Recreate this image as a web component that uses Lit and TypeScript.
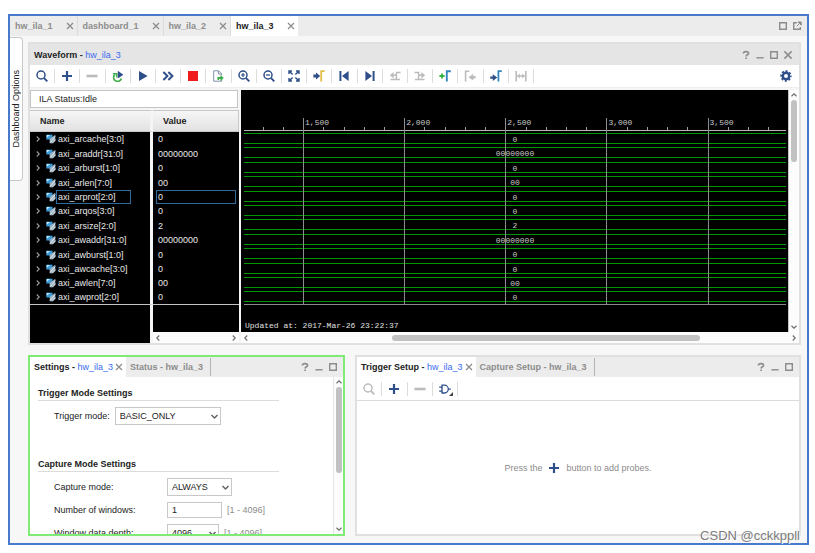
import { LitElement, html, css, svg, nothing } from "lit";
import { customElement } from "lit/decorators.js";
import { classMap } from "lit/directives/class-map.js";

interface Signal {
  name: string;
  value: string;
}

const SIGNALS: Signal[] = [
  { name: "axi_arcache[3:0]", value: "0" },
  { name: "axi_araddr[31:0]", value: "00000000" },
  { name: "axi_arburst[1:0]", value: "0" },
  { name: "axi_arlen[7:0]", value: "00" },
  { name: "axi_arprot[2:0]", value: "0" },
  { name: "axi_arqos[3:0]", value: "0" },
  { name: "axi_arsize[2:0]", value: "2" },
  { name: "axi_awaddr[31:0]", value: "00000000" },
  { name: "axi_awburst[1:0]", value: "0" },
  { name: "axi_awcache[3:0]", value: "0" },
  { name: "axi_awlen[7:0]", value: "00" },
  { name: "axi_awprot[2:0]", value: "0" },
];
const SELECTED = 4;

const RANGE_START = 1208;
const RANGE_SPAN = 2680;
const toPercent = (t: number) => ((t - RANGE_START) / RANGE_SPAN) * 100;
const MAJOR = [1500, 2000, 2500, 3000, 3500];
const MINOR = Array.from({ length: 26 }, (_, i) => 1300 + i * 100).filter(
  (t) => t % 500 !== 0
);

const NAVY = "#2f4f8a";

/* Every glyph is drawn on a 12 x 12 grid. */
const GLYPHS = {
  search: svg`<circle cx="5" cy="5" r="4" fill="none" stroke="currentColor" stroke-width="1.5"/><path d="M8 8l3.3 3.3" stroke="currentColor" stroke-width="1.8"/>`,
  plus: svg`<path d="M6 1v10M1 6h10" stroke="currentColor" stroke-width="2.2"/>`,
  minus: svg`<path d="M0.5 6h11" stroke="currentColor" stroke-width="2.6"/>`,
  rerun: svg`<path d="M3.2 4.2A4 4 0 1 0 9.4 8.6" fill="none" stroke="#3fae49" stroke-width="1.7"/><path d="M.8 3.6h4v3.8" fill="none" stroke="#3fae49" stroke-width="1.4"/><path d="M5.8 .8l5.6 3.9-5.6 3.9z" fill="${NAVY}"/>`,
  play: svg`<path d="M2 1l8.6 5L2 11z" fill="currentColor"/>`,
  forward: svg`<path d="M1.4 2l4 4-4 4M6.4 2l4 4-4 4" fill="none" stroke="currentColor" stroke-width="2"/>`,
  stop: svg`<path d="M1 1h10v10H1z" fill="#ee1c1c"/>`,
  exportFile: svg`<path d="M6.6 .8H1.7v10.4h8V9.4M6.6 .8l3 3v1.6M6.4 .8v3.2h3.2" fill="none" stroke="#8290a8" stroke-width="1"/><path d="M5.4 10V7h3V5l3.4 3-3.4 3V9H7v1z" fill="#3fae49"/>`,
  zoomIn: svg`<circle cx="5" cy="5" r="4" fill="none" stroke="currentColor" stroke-width="1.5"/><path d="M8 8l3.3 3.3" stroke="currentColor" stroke-width="1.8"/><path d="M5 3v4M3 5h4" stroke="currentColor" stroke-width="1.2"/>`,
  zoomOut: svg`<circle cx="5" cy="5" r="4" fill="none" stroke="currentColor" stroke-width="1.5"/><path d="M8 8l3.3 3.3" stroke="currentColor" stroke-width="1.8"/><path d="M3 5h4" stroke="currentColor" stroke-width="1.3"/>`,
  fit: svg`<path d="M1 4V1h3M8 1h3v3M11 8v3H8M4 11H1V8M1 1l3.6 3.6M11 1L7.4 4.6M11 11L7.4 7.4M1 11l3.6-3.6" fill="none" stroke="currentColor" stroke-width="1.4"/>`,
  toCursor: svg`<path d="M.4 4.6h2.6V2.6L7.2 6 3 9.4v-2H.4z" fill="${NAVY}"/><path d="M8.2 11.5V1.2h3.4" fill="none" stroke="#e3bd4a" stroke-width="1.8"/>`,
  first: svg`<path d="M2.4 1v10" stroke="currentColor" stroke-width="2"/><path d="M10.6 1v10L4 6z" fill="currentColor"/>`,
  last: svg`<path d="M9.6 1v10" stroke="currentColor" stroke-width="2"/><path d="M1.4 1v10L8 6z" fill="currentColor"/>`,
  prevEdge: svg`<path d="M11.5 2.6H7.4v7M11 9.6H1.5" fill="none" stroke="currentColor" stroke-width="1.5"/><path d="M4.6 2v6.4L.8 5.2z" fill="currentColor"/><path d="M4 5.2h3" stroke="currentColor" stroke-width="1.6"/>`,
  nextEdge: svg`<path d="M.5 2.6h4.1v7M1 9.6h9.5" fill="none" stroke="currentColor" stroke-width="1.5"/><path d="M7.4 2v6.4l3.8-3.2z" fill="currentColor"/><path d="M5 5.2h3" stroke="currentColor" stroke-width="1.6"/>`,
  addMarker: svg`<path d="M3 3.4v5.2M.4 6h5.2" stroke="#35b23f" stroke-width="1.8"/><path d="M7.8 11.5V1.2h4" fill="none" stroke="#3585bd" stroke-width="1.9"/>`,
  prevMarker: svg`<path d="M1.6 11.5V1.2h3.6" fill="none" stroke="currentColor" stroke-width="1.6"/><path d="M11.6 6H9.2V3.8L4.4 7.2l4.8 3.4V8.4h2.4z" fill="currentColor"/>`,
  nextMarker: svg`<path d="M.2 6.4h2.6V4.2L7.2 7.6 2.8 11V8.8H.2z" fill="${NAVY}"/><path d="M8.4 11.5V1.2h3.4" fill="none" stroke="#3585bd" stroke-width="1.8"/>`,
  span: svg`<path d="M1.2 1v10.4M10.8 1v10.4M2.5 6h7" stroke="currentColor" stroke-width="1.6"/><path d="M4.8 3.6v4.8L2 6zM7.2 3.6v4.8L10 6z" fill="currentColor"/>`,
  gear: svg`<circle cx="6" cy="6" r="3.2" fill="none" stroke="currentColor" stroke-width="2.4"/><circle cx="6" cy="6" r="4.8" fill="none" stroke="currentColor" stroke-width="1.8" stroke-dasharray="2.1 1.67" stroke-dashoffset="1.05"/>`,
  gate: svg`<path d="M3 2.2h2.4a3.9 3.9 0 0 1 0 7.8H3z" fill="none" stroke="currentColor" stroke-width="1.3"/><path d="M.2 4.1h3M.2 8.1h3M9.2 6.1h2.6" stroke="currentColor" stroke-width="1.3"/>`,
  close: svg`<path d="M2.4 2.4l7.2 7.2M9.6 2.4l-7.2 7.2" stroke="currentColor" stroke-width="1.5"/>`,
  minimize: svg`<path d="M2.4 8.8h7.2" stroke="currentColor" stroke-width="1.4"/>`,
  maximize: svg`<path d="M2.7 2.7h6.6v6.6H2.7z" fill="none" stroke="currentColor" stroke-width="1.4"/>`,
  popout: svg`<path d="M6 2.7H2.7v6.6h6.6V7" fill="none" stroke="currentColor" stroke-width="1.4"/><path d="M7 2h3.2v3.2zM5.8 6.2l3-3" fill="currentColor" stroke="currentColor" stroke-width="1"/>`,
  help: svg`<path d="M3.4 4.4c0-2.4 5.2-2.4 5.2 0 0 1.4-2.5 1.3-2.5 3M6.1 8.5V10" fill="none" stroke="currentColor" stroke-width="1.6"/>`,
  up: svg`<path d="M3 7.5l3-3 3 3" fill="none" stroke="currentColor" stroke-width="1.3"/>`,
  down: svg`<path d="M3 4.5l3 3 3-3" fill="none" stroke="currentColor" stroke-width="1.3"/>`,
  left: svg`<path d="M7.5 3l-3 3 3 3" fill="none" stroke="currentColor" stroke-width="1.3"/>`,
  right: svg`<path d="M4.5 3l3 3-3 3" fill="none" stroke="currentColor" stroke-width="1.3"/>`,
  drop: svg`<path d="M2 4l4 4 4-4" fill="none" stroke="currentColor" stroke-width="2"/>`,
  bus: svg`<path d="M.4 .8h7.4v5.8H.4z" fill="#3c9ad6"/><path d="M.8 1.2h4L.8 4.6z" fill="#c8ecff"/><path d="M4.4 6L11.2 1v7.4L7.4 11.2H4.4z" fill="#9fb4c2"/><path d="M5 10.2L11 3.2M7.6 11.2l4-4.6" stroke="#eef3f6" stroke-width="1"/>`,
};
type GlyphName = keyof typeof GLYPHS;

const glyph = (name: GlyphName, extra = "") =>
  html`<svg class="glyph ${extra}" viewBox="0 0 12 12" aria-hidden="true">${GLYPHS[name]}</svg>`;

const shared = css`
  * {
    box-sizing: border-box;
  }
  button {
    margin: 0;
    padding: 0;
    border: 0;
    background: none;
    font: inherit;
    color: inherit;
    display: flex;
    align-items: center;
    justify-content: center;
  }
  .glyph {
    display: block;
    flex: none;
    width: 12px;
    height: 12px;
  }
  .small {
    width: 10px;
    height: 10px;
  }
  .subject {
    color: #3a6cf0;
    font-weight: 400;
  }
  .controls {
    display: flex;
    gap: 2px;
    margin-left: auto;
    color: #8c8c8c;
  }
  .tools {
    display: grid;
    grid-auto-flow: column;
    grid-auto-columns: 1fr;
    align-items: center;
    color: #2f4f8a;
  }
  .tool {
    position: relative;
    height: 14px;
    border-right: 1px solid #dcdcdc;
  }
  .off {
    color: #bcbcbc;
  }
  .bar {
    display: flex;
    align-items: center;
    justify-content: space-between;
    background: #fcfcfc;
    color: #6a6a6a;
  }
  .vertical {
    flex-direction: column;
    width: 10px;
    flex: none;
  }
  .horizontal {
    height: 11px;
  }
  .track {
    flex: 1;
    align-self: stretch;
    display: flex;
  }
  .vertical .track {
    flex-direction: column;
    align-items: center;
  }
  .horizontal .track {
    align-items: center;
  }
  .thumb {
    border-radius: 3px;
    background: #c1c1c1;
  }
  .vertical .thumb {
    width: 6px;
  }
  .horizontal .thumb {
    height: 6px;
  }
`;

const toolButton = (name: GlyphName, label: string, off = false) => html`<button
  class=${classMap({ tool: true, off })}
  aria-label=${label}
>
  ${glyph(name)}
</button>`;

@customElement("wave-panel")
class WavePanel extends LitElement {
  static styles = [
    shared,
    css`
      :host {
        display: block;
        border: 2px solid #e0e0e0;
        background: #f5f5f5;
      }
      .title {
        display: flex;
        align-items: center;
        height: 21px;
        padding: 0 5px 0 4px;
        background: #e5e5e5;
      }
      .name {
        margin: 0;
        font-size: 9px;
      }
      .toolbar {
        display: flex;
        align-items: center;
        height: 23px;
        padding-right: 7px;
        background: #fff;
        border-bottom: 1px solid #eee;
      }
      .tools {
        width: 504px;
      }
      .settings {
        margin-left: auto;
        color: #2f4f8a;
      }
      .body {
        display: flex;
        padding-top: 2px;
      }
      .left {
        flex: none;
        width: 209px;
        margin-right: 2px;
      }
      .status {
        height: 18px;
        margin-right: 1px;
        padding: 0 8px;
        border: 1px solid #c4c4c4;
        background: #fff;
        line-height: 17px;
      }
      .signals {
        width: 100%;
        margin-top: 2px;
        border-collapse: separate;
        border-spacing: 0;
        table-layout: fixed;
        color: #e8e8e8;
      }
      .names {
        width: 123px;
      }
      .signals th {
        height: 22px;
        padding: 0 10px;
        border: 1px solid #c8c8c8;
        border-width: 1px 1px 1px 0;
        background: linear-gradient(#f6f6f6, #e2e2e2);
        color: #222;
        text-align: left;
      }
      .signals td {
        height: 14px;
        padding: 0;
        background: #000;
        line-height: 12px;
      }
      .signals .tall td {
        height: 15px;
      }
      .signals .first {
        border-right: 3px solid #f5f5f5;
      }
      .signals tr:last-child .cell-line {
        border-bottom: 1px solid #c4c4c4;
      }
      .signal {
        display: flex;
        align-items: center;
        gap: 3px;
        padding-left: 3px;
      }
      .chevron {
        color: #9c9c9c;
      }
      .item {
        display: flex;
        align-items: center;
      }
      .label {
        height: 14px;
        padding: 0 1px;
        border: 1px solid transparent;
      }
      .value {
        height: 14px;
        margin: 0 3px;
        padding: 0 1px;
        border: 1px solid transparent;
      }
      .label.picked {
        width: 75px;
        border-color: #2d6c9c;
      }
      .value.picked {
        border-color: #2d6c9c;
      }
      .signals .filler {
        height: 38px;
        vertical-align: bottom;
      }
      .right {
        flex: 1;
        min-width: 0;
      }
      .view {
        display: flex;
      }
      .plot {
        flex: 1;
        min-width: 0;
        padding: 0 2px 0 3px;
        background: #000;
        border-right: 1px solid #c4c4c4;
        color: #c8c8c8;
        font: 8px "Liberation Mono", monospace;
      }
      .chart {
        position: relative;
        border-bottom: 1px solid #8c8c8c;
      }
      .ruler {
        height: 41px;
        border-bottom: 1px solid #b4b4b4;
        margin-bottom: 1px;
      }
      .major {
        position: absolute;
        top: 28px;
        bottom: 0;
        padding-left: 1px;
        border-left: 1px solid #8c8c8c;
        line-height: 9px;
      }
      .minor {
        position: absolute;
        top: 37px;
        height: 3px;
        border-left: 1px solid #9c9c9c;
      }
      .lane {
        display: flow-root;
        height: 14px;
      }
      .lane.tall {
        height: 15px;
      }
      .lane:last-child {
        height: 14px;
      }
      .trace {
        height: 11px;
        margin-top: 1px;
        border: 1px solid #009600;
        border-width: 1px 0;
        line-height: 11px;
        text-align: center;
      }
      .stamp {
        height: 27px;
        padding: 16px 0 0 1px;
        line-height: 9px;
        color: #e0e0e0;
      }
      .push {
        flex: 144;
      }
      .fill {
        flex: 313;
      }
      .rest {
        flex: 91;
      }
      .page {
        flex: 62;
      }
      .below {
        flex: 161;
      }
    `,
  ];

  private isTall(i: number) {
    return i % 5 === 1 || i % 5 === 3;
  }

  render() {
    return html`
      <header class="title">
        <h2 class="name">Waveform - <span class="subject">hw_ila_3</span></h2>
        <div class="controls">
          <button aria-label="Help">${glyph("help")}</button>
          <button aria-label="Minimize">${glyph("minimize")}</button>
          <button aria-label="Maximize">${glyph("maximize")}</button>
          <button aria-label="Close">${glyph("close")}</button>
        </div>
      </header>
      <div class="toolbar">
        <div class="tools">
          ${toolButton("search", "Find")} ${toolButton("plus", "Add")}
          ${toolButton("minus", "Remove", true)} ${toolButton("rerun", "Run trigger repeatedly")}
          ${toolButton("play", "Run trigger")} ${toolButton("forward", "Run immediate")}
          ${toolButton("stop", "Stop")} ${toolButton("exportFile", "Export data")}
          ${toolButton("zoomIn", "Zoom in")} ${toolButton("zoomOut", "Zoom out")}
          ${toolButton("fit", "Zoom fit")} ${toolButton("toCursor", "Go to cursor")}
          ${toolButton("first", "Go to start")} ${toolButton("last", "Go to end")}
          ${toolButton("prevEdge", "Previous transition", true)}
          ${toolButton("nextEdge", "Next transition", true)}
          ${toolButton("addMarker", "Add marker")}
          ${toolButton("prevMarker", "Previous marker", true)}
          ${toolButton("nextMarker", "Next marker")} ${toolButton("span", "Swap cursors", true)}
        </div>
        <button class="settings" aria-label="Settings">${glyph("gear")}</button>
      </div>
      <div class="body">
        <div class="left">
          <div class="status">ILA Status:Idle</div>
          <table class="signals">
            <colgroup>
              <col class="names" />
              <col />
            </colgroup>
            <thead>
              <tr>
                <th class="first">Name</th>
                <th>Value</th>
              </tr>
            </thead>
            <tbody>
              ${SIGNALS.map((s, i) => {
                const picked = i === SELECTED;
                return html`<tr class=${classMap({ tall: this.isTall(i) })}>
                  <td class="first cell-line">
                    <div class="signal">
                      ${glyph("right", "chevron small")}
                      <div class="item">
                        ${glyph("bus", "small")}
                        <span class=${classMap({ label: true, picked })}>${s.name}</span>
                      </div>
                    </div>
                  </td>
                  <td class="cell-line">
                    <div class=${classMap({ value: true, picked })}>${s.value}</div>
                  </td>
                </tr>`;
              })}
            </tbody>
            <tfoot>
              <tr>
                <td class="first filler"></td>
                <td class="filler">
                  <div class="bar horizontal">
                    ${glyph("left", "small")}${glyph("right", "small")}
                  </div>
                </td>
              </tr>
            </tfoot>
          </table>
        </div>
        <div class="right">
          <div class="view">
            <div class="plot">
              <div class="chart">
                <div class="ruler">
                  ${MAJOR.map(
                    (t) => html`<div class="major" style="left:${toPercent(t)}%">
                      ${t.toLocaleString("en-US")}
                    </div>`
                  )}
                  ${MINOR.map((t) => html`<div class="minor" style="left:${toPercent(t)}%"></div>`)}
                </div>
                ${SIGNALS.map(
                  (s, i) => html`<div class=${classMap({ lane: true, tall: this.isTall(i) })}>
                    <div class="trace">${s.value}</div>
                  </div>`
                )}
              </div>
              <div class="stamp">Updated at: 2017-Mar-26 23:22:37</div>
            </div>
            <div class="bar vertical">
              ${glyph("up", "small")}
              <div class="track">
                <div class="thumb page"></div>
                <div class="below"></div>
              </div>
              ${glyph("down", "small")}
            </div>
          </div>
          <div class="bar horizontal">
            ${glyph("left", "small")}
            <div class="track">
              <div class="push"></div>
              <div class="thumb fill"></div>
              <div class="rest"></div>
            </div>
            ${glyph("right", "small")}
          </div>
        </div>
      </div>
    `;
  }
}

const dockStyles = css`
  :host {
    display: flex;
    flex-direction: column;
    min-width: 0;
    min-height: 0;
    overflow: hidden;
    border: 2px solid #e0e0e0;
    background: #fff;
  }
  .strip {
    display: flex;
    flex: none;
    align-items: center;
    height: 20px;
    padding-right: 4px;
    background: #ececec;
  }
  .tab {
    height: 20px;
    gap: 1px;
    padding: 0 2px 0 4px;
    font-weight: 700;
    white-space: pre;
    color: #8c8c8c;
  }
  .tab.current {
    background: #fff;
    color: #222;
  }
  .tab.other {
    height: 18px;
    padding: 0 7px 0 4px;
    border-right: 1px solid #b4b4b4;
  }
  .tab .glyph {
    color: #8c8c8c;
  }
`;

@customElement("settings-panel")
class SettingsPanel extends LitElement {
  static styles = [
    shared,
    dockStyles,
    css`
      :host {
        border-color: #7fea76;
      }
      .area {
        flex: 1;
        min-height: 0;
        display: flex;
      }
      .form {
        flex: 1;
        min-width: 0;
        overflow: hidden;
        padding: 10px 54px 0 8px;
      }
      .group {
        margin: 0;
        height: 14px;
        border-bottom: 1px solid #dcdcdc;
        font-size: 9px;
        line-height: 12px;
      }
      .group.later {
        margin-top: 33px;
      }
      .row {
        display: flex;
        align-items: center;
        gap: 5px;
        height: 18px;
        margin-top: 5px;
        padding-left: 16px;
        white-space: nowrap;
      }
      .row.first {
        margin-top: 6px;
      }
      .wide {
        width: 108px;
      }
      .hint {
        color: #8c8c8c;
      }
      .pick {
        position: relative;
        display: flex;
        align-items: center;
      }
      .pick .glyph {
        position: absolute;
        right: 2px;
        width: 9px;
        height: 9px;
        color: #666;
        pointer-events: none;
      }
      select,
      input {
        appearance: none;
        height: 18px;
        margin: 0;
        padding: 0 4px;
        border: 1px solid #c8c8c8;
        border-radius: 0;
        background: #fff;
        color: #222;
        font: inherit;
      }
      .mode {
        width: 106px;
      }
      .capture {
        width: 65px;
      }
      .depth {
        width: 52px;
      }
      input {
        width: 55px;
        height: 16px;
      }
      .bar {
        border-left: 1px solid #e5e5e5;
      }
      .page {
        flex: 86;
      }
      .below {
        flex: 51;
      }
    `,
  ];

  render() {
    return html`
      <div class="strip">
        <button class="tab current"><span>Settings - <span class="subject">hw_ila_3</span></span>${glyph("close", "small")}</button>
        <button class="tab other">Status - hw_ila_3</button>
        <div class="controls">
          <button aria-label="Help">${glyph("help")}</button>
          <button aria-label="Minimize">${glyph("minimize")}</button>
          <button aria-label="Maximize">${glyph("maximize")}</button>
        </div>
      </div>
      <div class="area">
        <form class="form">
          <h3 class="group">Trigger Mode Settings</h3>
          <div class="row first">
            <label for="mode">Trigger mode:</label>
            <span class="pick">
              <select id="mode" class="mode"><option>BASIC_ONLY</option></select>
              ${glyph("drop")}
            </span>
          </div>
          <h3 class="group later">Capture Mode Settings</h3>
          <div class="row first">
            <label class="wide" for="capture">Capture mode:</label>
            <span class="pick">
              <select id="capture" class="capture"><option>ALWAYS</option></select>
              ${glyph("drop")}
            </span>
          </div>
          <div class="row">
            <label class="wide" for="windows">Number of windows:</label>
            <input id="windows" .value=${"1"} />
            <span class="hint">[1 - 4096]</span>
          </div>
          <div class="row">
            <label class="wide" for="depth">Window data depth:</label>
            <span class="pick">
              <select id="depth" class="depth"><option>4096</option></select>
              ${glyph("drop")}
            </span>
            <span class="hint">[1 - 4096]</span>
          </div>
        </form>
        <div class="bar vertical">
          ${glyph("up", "small")}
          <div class="track">
            <div class="thumb page"></div>
            <div class="below"></div>
          </div>
          ${glyph("down", "small")}
        </div>
      </div>
    `;
  }
}

@customElement("trigger-panel")
class TriggerPanel extends LitElement {
  static styles = [
    shared,
    dockStyles,
    css`
      .toolbar {
        flex: none;
        height: 24px;
        display: flex;
        align-items: center;
        border-bottom: 1px solid #dcdcdc;
      }
      .tools {
        width: 101px;
      }
      .corner {
        position: absolute;
        right: 4px;
        bottom: 0;
        border: 2px solid #444;
        border-top-color: transparent;
        border-left-color: transparent;
      }
      .empty {
        flex: 1;
        display: flex;
        align-items: center;
        justify-content: center;
        gap: 6px;
        margin: 0;
        color: #8c8c8c;
      }
      .empty .glyph {
        color: #2f4f8a;
      }
    `,
  ];

  render() {
    return html`
      <div class="strip">
        <button class="tab current"><span>Trigger Setup - <span class="subject">hw_ila_3</span></span>${glyph("close", "small")}</button>
        <button class="tab other">Capture Setup - hw_ila_3</button>
        <div class="controls">
          <button aria-label="Help">${glyph("help")}</button>
          <button aria-label="Minimize">${glyph("minimize")}</button>
          <button aria-label="Maximize">${glyph("maximize")}</button>
        </div>
      </div>
      <div class="toolbar">
        <div class="tools">
          ${toolButton("search", "Find", true)} ${toolButton("plus", "Add probe")}
          ${toolButton("minus", "Remove probe", true)}
          <button class="tool" aria-label="Trigger condition">
            ${glyph("gate")}<span class="corner"></span>
          </button>
        </div>
      </div>
      <p class="empty"><span>Press the</span>${glyph("plus")}<span>button to add probes.</span></p>
    `;
  }
}

@customElement("app-root")
class AppRoot extends LitElement {
  static styles = [
    shared,
    css`
      :host {
        display: flex;
        box-sizing: border-box;
        height: 100vh;
        padding: 14px 6px 8px 8px;
        background: #fff;
        color: #222;
        font: 9px/12px "Liberation Sans", Arial, sans-serif;
      }
      .window {
        position: relative;
        flex: 1;
        min-width: 0;
        display: flex;
        flex-direction: column;
        border: 2px solid #477acb;
        background: #f7f7f7;
      }
      .tabs {
        display: flex;
        align-items: center;
        flex: none;
        height: 20px;
        padding-right: 4px;
        background: #ececec;
      }
      .tab {
        height: 20px;
        gap: 12px;
        padding: 0 2px 0 5px;
        border-right: 1px solid #dcdcdc;
        font-weight: 700;
        color: #8c8c8c;
      }
      .tab.current {
        background: #fff;
        color: #222;
        border: 0;
      }
      .tab .glyph {
        color: #8c8c8c;
      }
      .content {
        flex: 1;
        min-height: 0;
        display: flex;
        gap: 5px;
        padding: 0 6px 7px 0;
      }
      .options {
        flex: none;
        width: 13px;
        height: 144px;
        margin-top: 1px;
        border: 1px solid #c8c8c8;
        border-left: 0;
        border-radius: 0 4px 4px 0;
        background: #fff;
        writing-mode: vertical-rl;
      }
      .turned {
        transform: rotate(180deg);
        white-space: nowrap;
      }
      .panels {
        flex: 1;
        min-width: 0;
        display: flex;
        flex-direction: column;
        gap: 10px;
        padding-top: 6px;
      }
      .docks {
        flex: 1;
        min-height: 0;
        display: grid;
        grid-template-columns: 317fr 446fr;
        gap: 10px;
      }
      .mark {
        position: absolute;
        right: 7px;
        bottom: 0;
        font-size: 13px;
        line-height: 14px;
        color: #7c7c7c;
        text-shadow: 1px 1px 0 #fff;
      }
    `,
  ];

  render() {
    const tabs = ["hw_ila_1", "dashboard_1", "hw_ila_2", "hw_ila_3"];
    return html`
      <main class="window">
        <nav class="tabs">
          ${tabs.map(
            (t) => html`<button
              class=${classMap({ tab: true, current: t === "hw_ila_3" })}
              aria-current=${t === "hw_ila_3" ? "page" : nothing}
            >
              ${t}${glyph("close", "small")}
            </button>`
          )}
          <div class="controls">
            <button aria-label="Maximize">${glyph("maximize")}</button>
            <button aria-label="Float">${glyph("popout")}</button>
          </div>
        </nav>
        <div class="content">
          <button class="options"><span class="turned">Dashboard Options</span></button>
          <div class="panels">
            <wave-panel></wave-panel>
            <div class="docks">
              <settings-panel></settings-panel>
              <trigger-panel></trigger-panel>
            </div>
          </div>
        </div>
        <div class="mark">CSDN @cckkppll</div>
      </main>
    `;
  }
}
